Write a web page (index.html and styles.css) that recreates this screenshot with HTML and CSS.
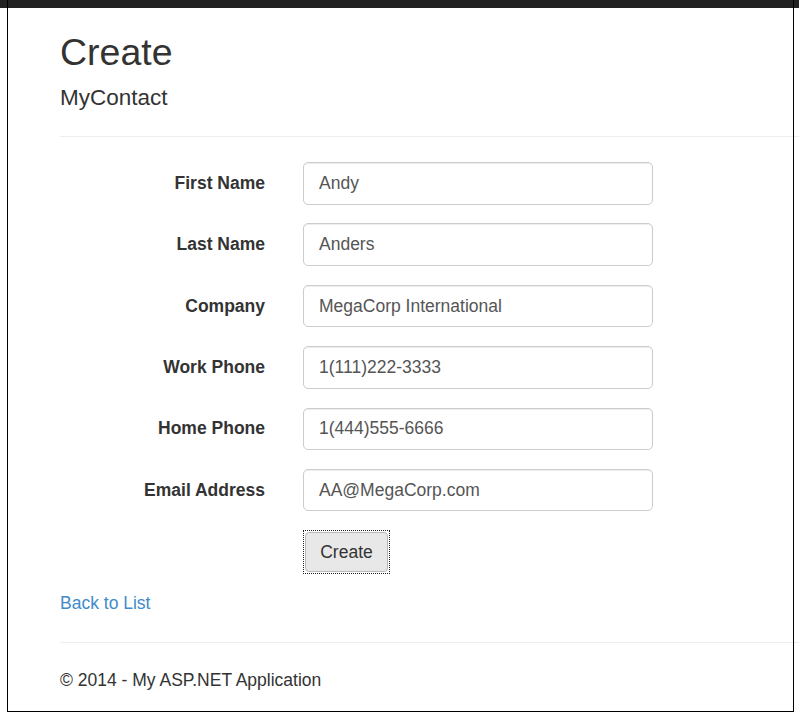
FILE: index.html
```html
<!DOCTYPE html>
<html lang="en">
<head>
<meta charset="utf-8">
<title>Create - My ASP.NET Application</title>
<link rel="stylesheet" href="styles.css">
</head>
<body>
<div class="topbar"></div>
<div class="page">
  <h2 class="title">Create</h2>
  <h4 class="subtitle">MyContact</h4>
  <hr class="rule">
  <form class="form">
    <div class="row"><label class="label">First Name</label><input class="field" type="text" value="Andy"></div>
    <div class="row"><label class="label">Last Name</label><input class="field" type="text" value="Anders"></div>
    <div class="row"><label class="label">Company</label><input class="field" type="text" value="MegaCorp International"></div>
    <div class="row"><label class="label">Work Phone</label><input class="field" type="text" value="1(111)222-3333"></div>
    <div class="row"><label class="label">Home Phone</label><input class="field" type="text" value="1(444)555-6666"></div>
    <div class="row"><label class="label">Email Address</label><input class="field" type="text" value="AA@MegaCorp.com"></div>
    <div class="row"><span class="label"></span><button class="btn" type="button"><span class="btn-inner">Create</span></button></div>
  </form>
  <div class="back"><a class="link" href="#">Back to List</a></div>
  <hr class="rule footer-rule">
  <footer class="footer"><p class="copy">© 2014 - My ASP.NET Application</p></footer>
</div>
<div class="frame"></div>
</body>
</html>
```

FILE: styles.css
```css
html, body {
  margin: 0;
  padding: 0;
  background: #fff;
}
body {
  font-family: "Liberation Sans", Arial, sans-serif;
  font-size: 17.5px;
  line-height: 25px;
  color: #333;
  overflow: hidden;
  height: 717px;
  position: relative;
}
.topbar {
  height: 8px;
  background: #222;
}
.page {
  padding-left: 60px;
}
.title {
  margin: 24px 0 0;
  font-size: 37.5px;
  line-height: 41px;
  font-weight: normal;
}
.subtitle {
  margin: 12px 0 0;
  font-size: 22.5px;
  line-height: 25px;
  font-weight: normal;
}
.rule {
  margin: 26px 0 0;
  border: 0;
  border-top: 1px solid #eee;
  height: 0;
}
.form {
  margin-top: 25px;
  display: flex;
  flex-direction: column;
  gap: 18.9px;
}
.row {
  display: flex;
  align-items: center;
  gap: 38px;
}
.label {
  width: 205px;
  text-align: right;
  font-weight: bold;
}
.field {
  box-sizing: border-box;
  width: 350px;
  height: 42.5px;
  padding: 0 15px;
  border: 1px solid #ccc;
  border-radius: 5px;
  font-family: "Liberation Sans", Arial, sans-serif;
  font-size: 17.5px;
  color: #555;
  background: #fff;
  box-shadow: inset 0 1px 1px rgba(0,0,0,0.075);
  outline: none;
}
.btn {
  box-sizing: border-box;
  width: 87px;
  height: 44px;
  padding: 1px;
  margin: 0;
  border: 1px dotted #222;
  background: #fff;
  font-family: "Liberation Sans", Arial, sans-serif;
  font-size: 17.5px;
  color: #333;
  display: flex;
}
.btn-inner {
  flex: 1;
  display: flex;
  align-items: center;
  justify-content: center;
  border: 1px solid #b8b8b8;
  border-radius: 4px;
  background: #e8e8e8;
}
.back {
  margin-top: 16.5px;
}
.link {
  color: #428bca;
  text-decoration: none;
}
.footer-rule {
  margin-top: 26px;
}
.copy {
  margin: 25px 0 0;
}
.frame {
  position: absolute;
  left: 7px;
  top: 0;
  width: 785px;
  height: 711px;
  border-left: 1px solid #000;
  border-right: 1px solid #000;
  border-bottom: 1px solid #000;
  pointer-events: none;
}
```
